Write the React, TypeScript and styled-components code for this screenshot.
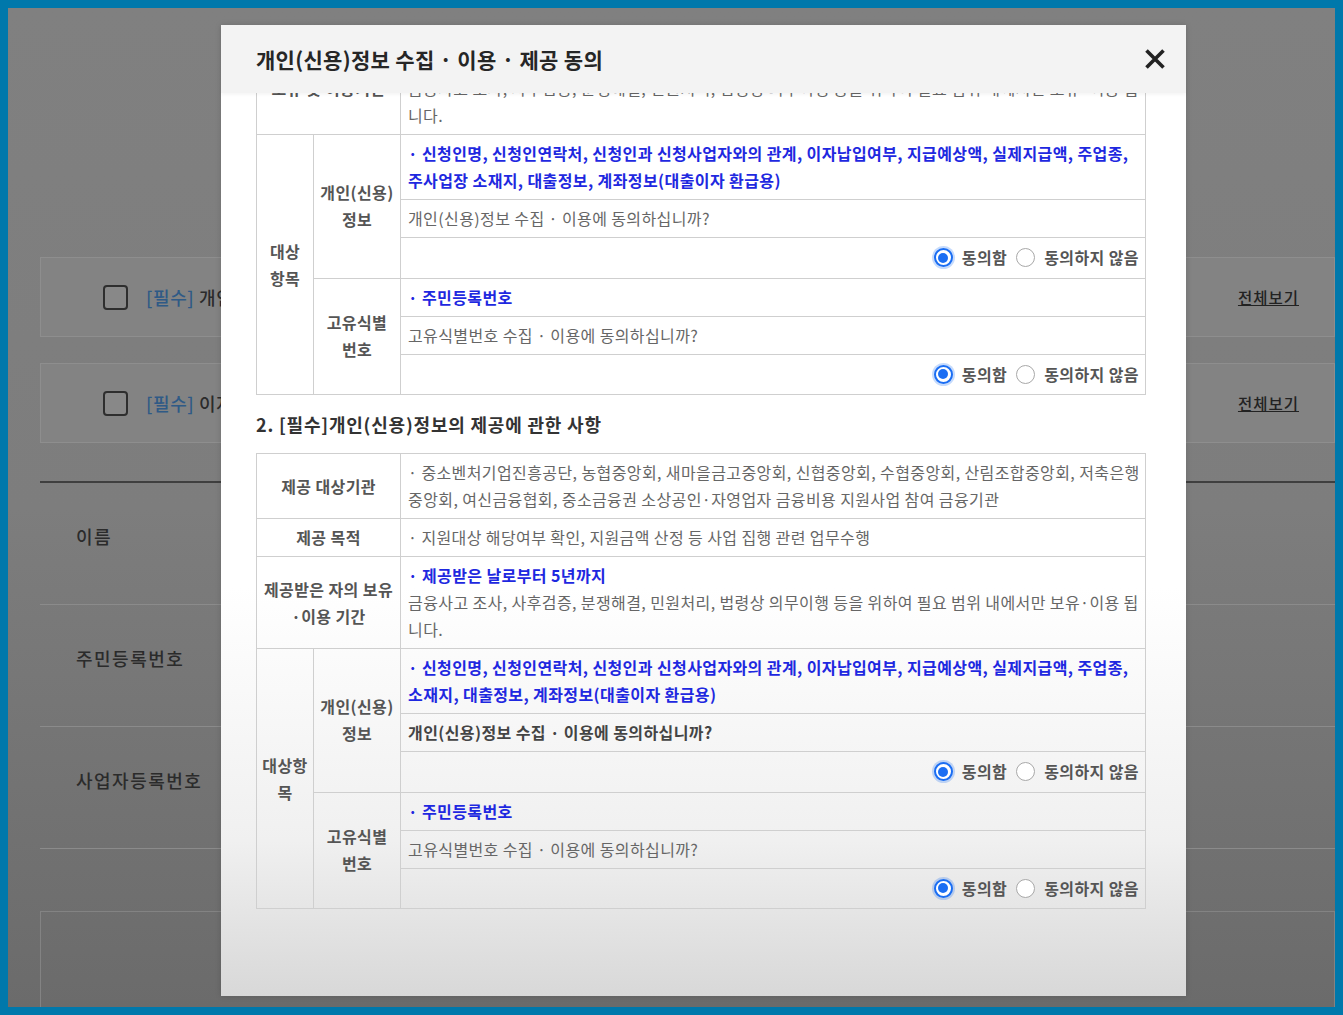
import { useLayoutEffect, useRef, type ReactNode } from "react";
import styled, { createGlobalStyle } from "styled-components";

const GlobalStyle = createGlobalStyle`
  html, body {
    margin: 0;
    padding: 0;
  }
  body {
    background: #0078ab;
    font-family: "Noto Sans CJK KR", "Noto Sans", sans-serif;
  }
  * {
    box-sizing: border-box;
  }
`;

const colors = {
  frame: "#0078ab",
  blue: "#1e28e0",
  radio: "#1b6ef3",
  label: "#555555",
  text: "#666666",
  dark: "#444444",
  line: "#cfcfcf",
  dimText: "#2b2b2b",
  dimLine: "#8b8b8b",
};

const AgreeRadios = () => (
  <RadioGroup>
    <RadioOption>
      <RadioMark $checked />
      <RadioText>동의함</RadioText>
    </RadioOption>
    <RadioOption>
      <RadioMark />
      <RadioText>동의하지 않음</RadioText>
    </RadioOption>
  </RadioGroup>
);

const TargetGroup = ({
  groupLabel,
  personalItems,
  strongQuestion,
}: {
  groupLabel: ReactNode;
  personalItems: ReactNode;
  strongQuestion?: boolean;
}) => (
  <>
    <tr>
      <LabelCell rowSpan={6}>{groupLabel}</LabelCell>
      <LabelCell rowSpan={3}>
        개인(신용)
        <br />
        정보
      </LabelCell>
      <ContentCell $tone="blue">{personalItems}</ContentCell>
    </tr>
    <tr>
      <ContentCell $tone={strongQuestion ? "dark" : "gray"}>
        개인(신용)정보 수집 · 이용에 동의하십니까?
      </ContentCell>
    </tr>
    <tr>
      <RadioCell>
        <AgreeRadios />
      </RadioCell>
    </tr>
    <tr>
      <LabelCell rowSpan={3}>
        고유식별
        <br />
        번호
      </LabelCell>
      <ContentCell $tone="blue">· 주민등록번호</ContentCell>
    </tr>
    <tr>
      <ContentCell>고유식별번호 수집 · 이용에 동의하십니까?</ContentCell>
    </tr>
    <tr>
      <RadioCell>
        <AgreeRadios />
      </RadioCell>
    </tr>
  </>
);

const Cols = () => (
  <colgroup>
    <col style={{ width: 57 }} />
    <col style={{ width: 87 }} />
    <col />
  </colgroup>
);

export default function App() {
  const bodyRef = useRef<HTMLDivElement>(null);
  const anchorRef = useRef<HTMLTableRowElement>(null);

  // the reference shows the dialog already scrolled: the retention row sits half under the header
  useLayoutEffect(() => {
    const body = bodyRef.current;
    const row = anchorRef.current;
    if (!body || !row) return;
    body.scrollTop =
      row.getBoundingClientRect().top - body.getBoundingClientRect().top + 50;
  }, []);

  return (
    <>
      <GlobalStyle />
      <Frame>
        <Screen>
          <PageBehind>
            <ConsentCard>
              <CheckBox />
              <CardTitle>
                <Required>[필수]</Required> 개인(신용)정보 수집·이용·제공 동의
              </CardTitle>
              <ViewAll>전체보기</ViewAll>
            </ConsentCard>
            <ConsentCard>
              <CheckBox />
              <CardTitle>
                <Required>[필수]</Required> 이자지원 신청 유의사항 확인
              </CardTitle>
              <ViewAll>전체보기</ViewAll>
            </ConsentCard>
            <Divider />
            <FormRow>이름</FormRow>
            <FormRow>주민등록번호</FormRow>
            <FormRow>사업자등록번호</FormRow>
            <BottomCard />
          </PageBehind>

          <Modal>
            <ModalHeader>
              <ModalTitle>개인(신용)정보 수집 · 이용 · 제공 동의</ModalTitle>
              <CloseButton aria-label="닫기">
                <svg width="24" height="24" viewBox="0 0 24 24">
                  <path
                    d="M3.5 3.5 L20.5 20.5 M20.5 3.5 L3.5 20.5"
                    stroke="#222"
                    strokeWidth="3.6"
                    fill="none"
                  />
                </svg>
              </CloseButton>
            </ModalHeader>

            <ModalBody ref={bodyRef}>
              <SectionTitle>1. [필수]개인(신용)정보의 수집·이용에 관한 사항</SectionTitle>
              <ConsentTable>
                <Cols />
                <tbody>
                  <tr>
                    <LabelCell colSpan={2}>수집·이용 목적</LabelCell>
                    <ContentCell>
                      · 지원대상 해당여부 확인, 지원금액 산정 등 사업 집행 관련 업무수행
                    </ContentCell>
                  </tr>
                  <tr ref={anchorRef}>
                    <LabelCell colSpan={2}>보유 및 이용기간</LabelCell>
                    <ContentCell>
                      <BlueLine>· 수집·이용 동의일로부터 5년까지</BlueLine>
                      금융사고 조사, 사후검증, 분쟁해결, 민원처리, 법령상 의무이행 등을 위하여 필요 범위
                      내에서만 보유·이용 됩<br />
                      니다.
                    </ContentCell>
                  </tr>
                  <TargetGroup
                    groupLabel={
                      <>
                        대상
                        <br />
                        항목
                      </>
                    }
                    personalItems={
                      <>
                        · 신청인명, 신청인연락처, 신청인과 신청사업자와의 관계, 이자납입여부, 지급예상액,
                        실제지급액, 주업종,
                        <br />
                        주사업장 소재지, 대출정보, 계좌정보(대출이자 환급용)
                      </>
                    }
                  />
                </tbody>
              </ConsentTable>

              <SectionTitle>2. [필수]개인(신용)정보의 제공에 관한 사항</SectionTitle>
              <ConsentTable>
                <Cols />
                <tbody>
                  <tr>
                    <LabelCell colSpan={2}>제공 대상기관</LabelCell>
                    <ContentCell>
                      · 중소벤처기업진흥공단, 농협중앙회, 새마을금고중앙회, 신협중앙회, 수협중앙회,
                      산림조합중앙회, 저축은행
                      <br />
                      중앙회, 여신금융협회, 중소금융권 소상공인·자영업자 금융비용 지원사업 참여 금융기관
                    </ContentCell>
                  </tr>
                  <tr>
                    <LabelCell colSpan={2}>제공 목적</LabelCell>
                    <ContentCell>
                      · 지원대상 해당여부 확인, 지원금액 산정 등 사업 집행 관련 업무수행
                    </ContentCell>
                  </tr>
                  <tr>
                    <LabelCell colSpan={2}>
                      제공받은 자의 보유
                      <br />
                      ·이용 기간
                    </LabelCell>
                    <ContentCell>
                      <BlueLine>· 제공받은 날로부터 5년까지</BlueLine>
                      금융사고 조사, 사후검증, 분쟁해결, 민원처리, 법령상 의무이행 등을 위하여 필요 범위
                      내에서만 보유·이용 됩<br />
                      니다.
                    </ContentCell>
                  </tr>
                  <TargetGroup
                    groupLabel={
                      <>
                        대상항
                        <br />목
                      </>
                    }
                    strongQuestion
                    personalItems={
                      <>
                        · 신청인명, 신청인연락처, 신청인과 신청사업자와의 관계, 이자납입여부, 지급예상액,
                        실제지급액, 주업종,
                        <br />
                        소재지, 대출정보, 계좌정보(대출이자 환급용)
                      </>
                    }
                  />
                </tbody>
              </ConsentTable>
              <BodyEnd />
            </ModalBody>
          </Modal>
        </Screen>
      </Frame>
    </>
  );
}

const Frame = styled.div`
  width: 1343px;
  height: 1015px;
  padding: 8px;
  background: ${colors.frame};
`;

const Screen = styled.div`
  position: relative;
  width: 100%;
  height: 100%;
  overflow: hidden;
  background: linear-gradient(180deg, #808080 0%, #7d7d7d 50%, #6b6b6b 100%);
`;

/* page behind the dimmed overlay */
const PageBehind = styled.div`
  display: flex;
  flex-direction: column;
  height: 100%;
  padding: 249px 0 0 32px;
`;

const ConsentCard = styled.div`
  display: flex;
  align-items: center;
  height: 80px;
  padding: 0 35px 0 62px;
  border: 1px solid #8e8e8e;
  background: #838383;
  & + & {
    margin-top: 26px;
  }
`;

const CheckBox = styled.span`
  width: 25px;
  height: 25px;
  border: 2px solid #2e2e2e;
  border-radius: 4px;
  background: #888888;
  flex-shrink: 0;
`;

const CardTitle = styled.div`
  flex: 1;
  margin-left: 18px;
  font-size: 18px;
  font-weight: 500;
  letter-spacing: 0.6px;
  color: ${colors.dimText};
`;

const Required = styled.span`
  color: #2f5a86;
`;

const ViewAll = styled.span`
  font-size: 15.5px;
  font-weight: 500;
  letter-spacing: 1px;
  color: #222;
  text-decoration: underline;
`;

const Divider = styled.div`
  height: 2px;
  margin-top: 38px;
  background: #3f3f3f;
`;

const FormRow = styled.div`
  display: flex;
  align-items: center;
  height: 122px;
  padding: 0 0 16px 36px;
  border-bottom: 1px solid ${colors.dimLine};
  font-size: 18px;
  font-weight: 500;
  letter-spacing: 1.5px;
  color: ${colors.dimText};
`;

const BottomCard = styled.div`
  flex: 1;
  margin-top: 62px;
  border: 1px solid #838383;
  border-bottom: none;
`;

/* dialog */
const Modal = styled.div`
  position: absolute;
  left: 213px;
  top: 17px;
  width: 965px;
  height: 971px;
  display: flex;
  flex-direction: column;
  background: linear-gradient(180deg, #ffffff 0%, #ffffff 58%, #f0f0f0 84%, #d8d8d8 100%);
  box-shadow: 0 0 6px rgba(0, 0, 0, 0.15);
`;

const ModalHeader = styled.div`
  display: flex;
  align-items: center;
  justify-content: space-between;
  flex-shrink: 0;
  height: 68px;
  padding: 0 19px 0 35px;
  background: #f3f3f3;
  box-shadow: 0 2px 3px rgba(0, 0, 0, 0.04);
  position: relative;
  z-index: 1;
`;

const ModalTitle = styled.h2`
  margin: 0;
  font-size: 21px;
  font-weight: 700;
  letter-spacing: 0.3px;
  color: #262626;
`;

const CloseButton = styled.button`
  display: flex;
  padding: 0;
  border: none;
  background: none;
  cursor: pointer;
`;

const ModalBody = styled.div`
  flex: 1;
  overflow: hidden;
  padding: 0 40px 0 35px;
`;

const SectionTitle = styled.h3`
  margin: 17px 0;
  font-size: 18px;
  line-height: 24px;
  font-weight: 700;
  letter-spacing: 0.8px;
  color: #333;
`;

const ConsentTable = styled.table`
  width: 100%;
  table-layout: fixed;
  border-collapse: collapse;
  font-size: 16px;
  letter-spacing: 0.4px;
  line-height: 27px;
`;

const LabelCell = styled.th`
  padding: 5px 2px;
  border: 1px solid ${colors.line};
  font-weight: 700;
  color: ${colors.label};
  text-align: center;
  vertical-align: middle;
  white-space: nowrap;
`;

const ContentCell = styled.td<{ $tone?: "blue" | "gray" | "dark" }>`
  padding: 5px 4px 5px 7px;
  border: 1px solid ${colors.line};
  text-align: left;
  vertical-align: middle;
  white-space: nowrap;
  font-weight: ${({ $tone }) => ($tone === "gray" || !$tone ? 400 : 700)};
  color: ${({ $tone }) =>
    $tone === "blue" ? colors.blue : $tone === "dark" ? colors.dark : colors.text};
`;

const BlueLine = styled.div`
  font-weight: 700;
  color: ${colors.blue};
`;

const RadioCell = styled.td`
  padding: 7.5px 6px 8px;
  border: 1px solid ${colors.line};
`;

const RadioGroup = styled.div`
  display: flex;
  justify-content: flex-end;
  align-items: center;
  gap: 9px;
  height: 24px;
`;

const RadioOption = styled.label`
  display: flex;
  align-items: center;
  gap: 9px;
`;

const RadioMark = styled.span<{ $checked?: boolean }>`
  position: relative;
  width: 19px;
  height: 19px;
  border-radius: 50%;
  background: #fff;
  border: ${({ $checked }) => ($checked ? `2px solid ${colors.radio}` : "1px solid #a8a8a8")};
  box-shadow: ${({ $checked }) => ($checked ? "0 0 0 2px rgba(27, 110, 243, 0.25)" : "none")};
  &::after {
    content: "";
    display: ${({ $checked }) => ($checked ? "block" : "none")};
    position: absolute;
    inset: 2.5px;
    border-radius: 50%;
    background: ${colors.radio};
  }
`;

const RadioText = styled.span`
  font-size: 16px;
  font-weight: 700;
  letter-spacing: 0.4px;
  color: ${colors.label};
`;

const BodyEnd = styled.div`
  height: 200px;
`;
